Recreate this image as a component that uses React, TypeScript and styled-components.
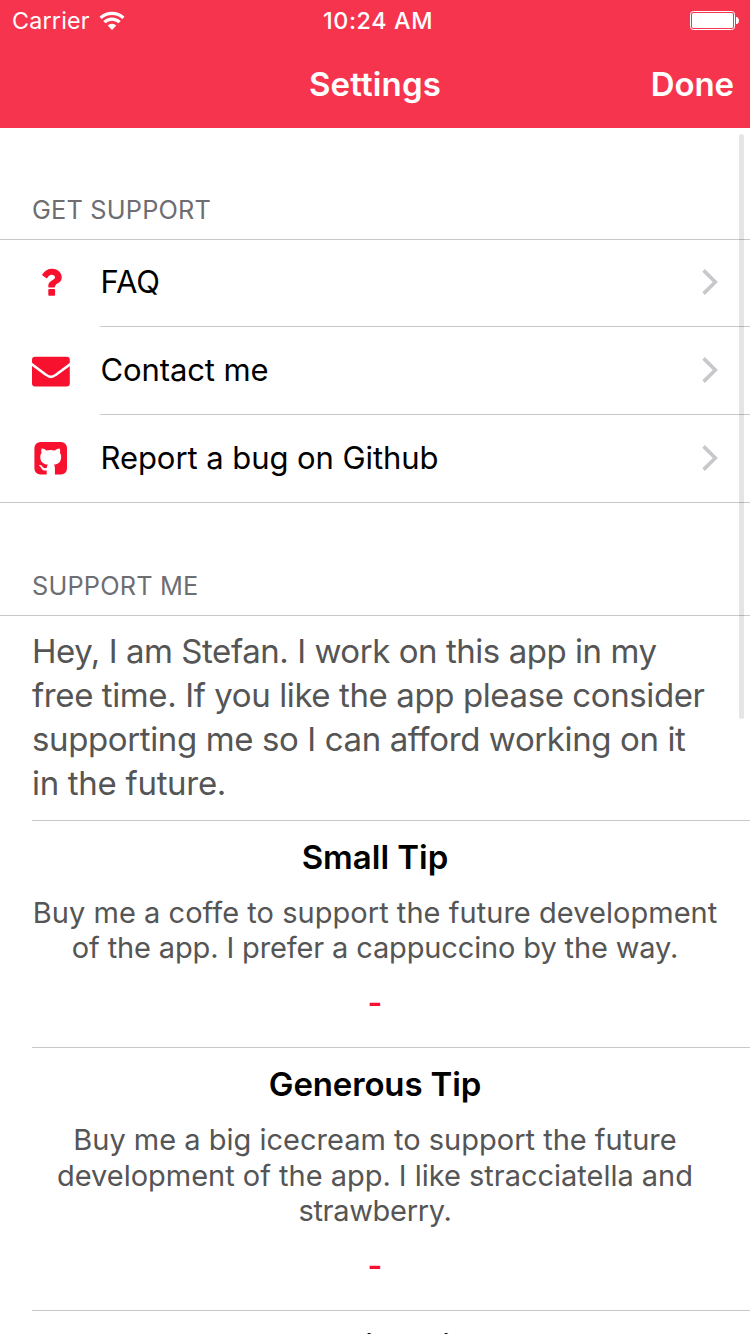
import React from "react";
import styled, { createGlobalStyle } from "styled-components";

const accent = "#f8112f";
const hairline = "#c8c7cc";

const GlobalStyle = createGlobalStyle`
  *, *::before, *::after { box-sizing: border-box; }
  html, body { margin: 0; padding: 0; background: #fff; }
  body { font-family: Inter, "Liberation Sans", sans-serif; overflow: hidden; }
`;

const Screen = styled.div`
  position: relative;
  display: flex;
  flex-direction: column;
  width: 750px;
  height: 1334px;
  overflow: hidden;
  background: #fff;
  & > * { flex: none; }
`;

const Header = styled.header`
  height: 128px;
  background: #f7344e;
  color: #fff;
`;

const StatusBar = styled.div`
  display: grid;
  grid-template-columns: 1fr auto 1fr;
  align-items: center;
  height: 40px;
  padding: 1px 11px 0 12px;
  font-size: 23.3px;
`;

const Carrier = styled.span`
  display: flex;
  align-items: center;
  gap: 9px;
`;

const Clock = styled.span`
  font-weight: 500;
  padding-left: 5px;
`;

const BatterySlot = styled.span`
  display: flex;
  justify-content: flex-end;
`;

const NavBar = styled.div`
  display: grid;
  grid-template-columns: 1fr auto 1fr;
  align-items: center;
  height: 88px;
  padding: 0 16px;
  font-size: 33px;
  font-weight: 600;
`;

const NavTitle = styled.h1`
  grid-column: 2;
  margin: 0;
  font-size: inherit;
  font-weight: inherit;
`;

const DoneButton = styled.button`
  justify-self: end;
  padding: 0;
  border: 0;
  background: none;
  color: inherit;
  font: inherit;
`;

const Text = styled.span<{ $track?: number }>`
  display: inline-block;
  white-space: nowrap;
  letter-spacing: ${(p) => p.$track ?? 0}px;
`;

const SectionHeader = styled.h2<{ $height: number }>`
  display: flex;
  align-items: flex-end;
  height: ${(p) => p.$height}px;
  margin: 0;
  padding: 0 32px 13px;
  border-bottom: 1px solid ${hairline};
  color: #6d6d72;
  font-size: 25.3px;
  line-height: 32px;
  font-weight: 400;
`;

const LinkList = styled.div`
  border-bottom: 1px solid ${hairline};
`;

const LinkRow = styled.div`
  display: flex;
  height: 88px;
  &:first-child { height: 87px; }
  &:last-child { height: 87px; }
`;

const IconCell = styled.div`
  display: flex;
  align-items: center;
  flex: none;
  width: 100px;
  padding: 0 0 1px 32px;
`;

const LinkBody = styled.div`
  display: flex;
  flex: 1;
  align-items: center;
  justify-content: space-between;
  padding: 0 31px 1px 0.5px;
  font-size: 31px;
  line-height: 38px;
  color: #000;
  ${LinkRow}:first-child & { padding-bottom: 2px; }
  ${LinkRow}:not(:last-child) & { border-bottom: 1px solid ${hairline}; }
`;

const Intro = styled.p`
  display: flex;
  flex-direction: column;
  align-items: flex-start;
  height: 205px;
  margin: 0 0 0 32px;
  padding-top: 13px;
  border-bottom: 1px solid ${hairline};
  color: #555;
  font-size: 33px;
  line-height: 44px;
`;

const Tip = styled.section<{ $height: number; $top: number }>`
  display: flex;
  flex-direction: column;
  align-items: center;
  height: ${(p) => p.$height}px;
  margin-left: 32px;
  padding: ${(p) => p.$top}px 32px 0 0;
  border-bottom: 1px solid ${hairline};
`;

const TipTitle = styled.h3`
  margin: 0;
  color: #000;
  font-size: 33px;
  line-height: 40px;
  font-weight: 600;
`;

const TipText = styled.p<{ $gap: number }>`
  display: flex;
  flex-direction: column;
  align-items: center;
  margin: ${(p) => p.$gap}px 0 0;
  color: #555;
  font-size: 29px;
  line-height: 35.5px;
`;

const Price = styled.span`
  margin-top: 19px;
  color: ${accent};
  font-size: 32px;
  line-height: 36px;
  font-weight: 600;
`;

const ScrollIndicator = styled.div`
  position: absolute;
  top: 134px;
  left: 739px;
  width: 5px;
  height: 585px;
  border-radius: 2.5px;
  background: rgba(0, 0, 0, 0.1);
`;

const WifiIcon = () => (
  <svg width="26" height="20" viewBox="0 0 26 20">
    <g fill="none" stroke="#fff" strokeWidth="3.2">
      <path d="M1.6 6.9A16.4 16.4 0 0 1 24.4 6.9" />
      <path d="M5.4 11.2A10.8 10.8 0 0 1 20.6 11.2" />
    </g>
    <path d="M13 18.9L8.7 14.4A6.2 6.2 0 0 1 17.3 14.4Z" fill="#fff" />
  </svg>
);

const BatteryIcon = () => (
  <svg width="49" height="19" viewBox="0 0 49 19">
    <rect x="0.5" y="0.5" width="44" height="18" rx="2.8" fill="none" stroke="#fff" />
    <rect x="2" y="2" width="41" height="15" rx="1.5" fill="#fff" />
    <path d="M46 6h1q2 1 2 3.5t-2 3.5h-1z" fill="#fff" />
  </svg>
);

const QuestionIcon = () => (
  <svg width="40" height="36" viewBox="0 0 40 36">
    <g transform="translate(.1 -1.7) scale(.0211)" fill={accent}>
      <path d="M1088 1256v240q0 16-12 28t-28 12h-240q-16 0-28-12t-12-28v-240q0-16 12-28t28-12h240q16 0 28 12t12 28zm316-600q0 54-15.5 101t-35 76.5-55 59.5-57.5 43.5-61 35.5q-41 23-68.5 65t-27.5 67q0 17-12 32.5t-28 15.5h-240q-15 0-25.5-18.5t-10.5-37.5v-45q0-83 65-156.5t143-108.5q59-27 84-56t25-76q0-42-46.5-74t-107.5-32q-65 0-108 29-35 25-107 115-13 16-31 16-12 0-25-8l-164-125q-13-10-15.5-25t5.5-28q160-266 464-266 80 0 161 31t146 83 106 127.5 41 158.5z" />
    </g>
  </svg>
);

const EnvelopeIcon = () => (
  <svg width="38" height="33" viewBox="0 0 38 33">
    <rect y="2.7" width="37.8" height="29.7" rx="3.2" fill={accent} />
    <path d="M-1 9.6L14.2 20.9Q18.9 24.8 23.6 20.9L39 9.6" fill="none" stroke="#fff" strokeWidth="2.5" />
  </svg>
);

const GithubIcon = () => (
  <svg width="40" height="34" viewBox="0 0 40 34">
    <rect x="2.4" y="1" width="32.6" height="32.6" rx="6" fill={accent} />
    <path
      transform="translate(-.2 .2)"
      d="M9.9 7.4C11.6 7.3 13.3 8.3 14.6 9.2Q18.9 8.2 23.2 9.2C24.6 8.2 26.2 7.4 27.9 7.4Q28.7 9.6 28.1 11.6Q29.5 13.3 29.3 16.2C29.1 21 26.4 22.8 22 23.4Q23.1 24.5 23.1 26.6V34H14.9V29.2C11.2 29.7 10.2 28.3 9.4 26.7Q8.9 25.5 7.5 24.6Q6.8 23.8 8.2 23.9C10.8 24.1 10.7 27.2 13.4 27.1Q14.5 27 15 26.6Q15.1 24.3 16.2 23.4C11.3 22.8 8.7 20.8 8.5 16.2Q8.3 13.4 9.8 11.6Q9 9.5 9.9 7.4Z"
      fill="#fff"
    />
  </svg>
);

const Chevron = () => (
  <svg width="17" height="28" viewBox="0 0 17 28">
    <path d="M1.6 2.4L13.3 14L1.6 25.6" fill="none" stroke="#c7c7cc" strokeWidth="3.6" />
  </svg>
);

const links = [
  { label: "FAQ", icon: <QuestionIcon />, track: 0 },
  { label: "Contact me", icon: <EnvelopeIcon />, track: -0.1 },
  { label: "Report a bug on Github", icon: <GithubIcon />, track: -0.06 },
];

const intro = [
  { text: "Hey, I am Stefan. I work on this app in my", track: -0.45 },
  { text: "free time. If you like the app please consider", track: -0.4 },
  { text: "supporting me so I can afford working on it", track: -0.38 },
  { text: "in the future.", track: -0.3 },
];

const tips = [
  {
    title: "Small Tip",
    titleTrack: 0,
    height: 227,
    top: 16,
    gap: 17.75,
    lines: [
      { text: "Buy me a coffe to support the future development", track: 0.04 },
      { text: "of the app. I prefer a cappuccino by the way.", track: -0.14 },
    ],
  },
  {
    title: "Generous Tip",
    titleTrack: -0.15,
    height: 263,
    top: 16,
    gap: 18,
    lines: [
      { text: "Buy me a big icecream to support the future", track: 0 },
      { text: "development of the app. I like stracciatella and", track: -0.02 },
      { text: "strawberry.", track: -0.3 },
    ],
  },
  { title: "Massive Tip", titleTrack: 0, height: 227, top: 15, gap: 18, lines: [] },
];

export default function App() {
  return (
    <Screen>
      <GlobalStyle />
      <Header>
        <StatusBar>
          <Carrier>
            <Text $track={0.2}>Carrier</Text>
            <WifiIcon />
          </Carrier>
          <Clock>
            <Text $track={0.65}>10:24 AM</Text>
          </Clock>
          <BatterySlot>
            <BatteryIcon />
          </BatterySlot>
        </StatusBar>
        <NavBar>
          <NavTitle>
            <Text $track={0.15}>Settings</Text>
          </NavTitle>
          <DoneButton>
            <Text $track={-0.1}>Done</Text>
          </DoneButton>
        </NavBar>
      </Header>

      <SectionHeader $height={112}>
        <Text $track={0.2}>GET SUPPORT</Text>
      </SectionHeader>
      <LinkList>
        {links.map((l) => (
          <LinkRow key={l.label}>
            <IconCell>{l.icon}</IconCell>
            <LinkBody>
              <Text $track={l.track}>{l.label}</Text>
              <Chevron />
            </LinkBody>
          </LinkRow>
        ))}
      </LinkList>

      <SectionHeader $height={113}>
        <Text $track={0.2}>SUPPORT ME</Text>
      </SectionHeader>
      <Intro>
        {intro.map((l) => (
          <Text key={l.text} $track={l.track}>{l.text}</Text>
        ))}
      </Intro>
      {tips.map((t) => (
        <Tip key={t.title} $height={t.height} $top={t.top}>
          <TipTitle>
            <Text $track={t.titleTrack}>{t.title}</Text>
          </TipTitle>
          <TipText $gap={t.gap}>
            {t.lines.map((l) => (
              <Text key={l.text} $track={l.track}>{l.text}</Text>
            ))}
          </TipText>
          {t.lines.length > 0 && <Price>-</Price>}
        </Tip>
      ))}
      <ScrollIndicator />
    </Screen>
  );
}
